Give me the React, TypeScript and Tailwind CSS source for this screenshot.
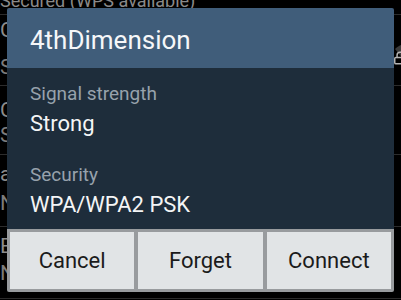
import { Lock } from "lucide-react";

type Row = {
  title: string;
  sub: string;
  pt: string;
  gap: string;
  h: string;
  icon?: boolean;
};

const rows: Row[] = [
  { title: "Olleh_WiFi_5G", sub: "Secured (WPS available)", pt: "pt-[3px]", gap: "mt-[14px]", h: "h-[71px]", icon: true },
  { title: "Olleh_WiFi", sub: "Secured", pt: "pt-[12px]", gap: "mt-[2px]", h: "h-[69px]" },
  { title: "anygate_home", sub: "Not in range", pt: "pt-[7px]", gap: "mt-[6px]", h: "h-[72px]" },
  { title: "Expresso", sub: "Not in range", pt: "pt-[7px]", gap: "mt-[4px]", h: "h-[72px]" },
];

function WifiLock() {
  return (
    <div className="relative mr-[-22px] mt-[6px] h-[28px] w-[30px] shrink-0">
      <svg viewBox="0 0 30 28" className="h-[28px] w-[30px]" fill="none">
        <path d="M2 10 C 9 3, 21 3, 28 10 L 15 26 Z" fill="#3a3a3a" />
      </svg>
      <Lock className="absolute bottom-[2px] left-[0px] h-[14px] w-[14px] text-[#b5b5b5]" strokeWidth={2.5} />
    </div>
  );
}

function Dialog() {
  return (
    <div className="absolute left-[7px] top-[8px] flex h-[284px] w-[387px] flex-col overflow-hidden rounded-[2px]">
      <div className="flex h-[60px] shrink-0 items-center bg-[#405d7a] px-[23px] pt-[4px]">
        <span className="text-[26px] leading-[30px] text-[#f6f7f9]">4thDimension</span>
      </div>
      <div className="h-[161px] shrink-0 bg-[#1e2d3b] px-[23px] pt-[14px]">
        <div>
          <p className="text-[19px] leading-[24px] text-[#97a2ac]">Signal strength</p>
          <p className="mt-[4px] text-[22px] leading-[28px] text-[#f4f5f6]">Strong</p>
        </div>
        <div className="mt-[25px]">
          <p className="text-[19px] leading-[24px] text-[#97a2ac]">Security</p>
          <p className="mt-[4px] text-[22px] leading-[28px] text-[#f4f5f6]">WPA/WPA2 PSK</p>
        </div>
      </div>
      <div className="flex h-[63px] shrink-0 gap-[4px] bg-[#989b9e] p-[3px]">
        {["Cancel", "Forget", "Connect"].map((label) => (
          <button
            key={label}
            type="button"
            className="flex flex-1 items-center justify-center bg-[#e1e4e6] text-[22px] leading-[28px] text-[#1b1b1b]"
          >
            {label}
          </button>
        ))}
      </div>
    </div>
  );
}

export default function App() {
  return (
    <div
      className="relative h-[300px] w-[401px] overflow-hidden bg-black"
      style={{ fontFamily: "Roboto, 'Noto Sans', sans-serif" }}
    >
      <div className="h-[23px] border-b border-[#2c2c2c]">
        <p className="mt-[-8px] text-[18px] leading-[18px] text-[#8a8a8a]">Secured (WPS available)</p>
      </div>
      {rows.map((row) => (
        <div key={row.title} className={`flex items-center justify-between border-b border-[#2c2c2c] ${row.h}`}>
          <div className={`self-start ${row.pt}`}>
            <p className="text-[21px] leading-[24px] text-[#8c8c8c]">{row.title}</p>
            <p className={`text-[21px] leading-[22px] text-[#7c7c7c] ${row.gap}`}>{row.sub}</p>
          </div>
          {row.icon ? <WifiLock /> : null}
        </div>
      ))}
      <Dialog />
    </div>
  );
}
